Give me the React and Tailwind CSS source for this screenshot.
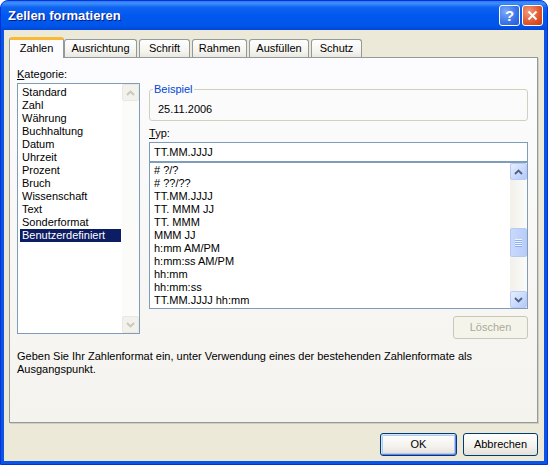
import React from "react";

function Chevron({ dir, color }) {
  return (
    <svg width="9" height="6" viewBox="0 0 9 6">
      <path
        d={dir === "up" ? "M1 5L4.5 1.5L8 5" : "M1 1L4.5 4.5L8 1"}
        fill="none"
        stroke={color}
        strokeWidth="1.8"
      />
    </svg>
  );
}

function ScrollBtn({ dir, disabled }) {
  if (disabled) {
    return (
      <div className="w-[17px] h-[17px] shrink-0 flex items-center justify-center rounded-[2px] border border-[#e9e8e1] bg-[#f2f1eb]">
        <Chevron dir={dir} color="#c9c7bb" />
      </div>
    );
  }
  return (
    <div className="w-[17px] h-[17px] shrink-0 flex items-center justify-center rounded-[2px] border border-[#b9cbf6] bg-[linear-gradient(135deg,#e6eefe_0%,#c8d8fb_60%,#b5c9f7_100%)]">
      <Chevron dir={dir} color="#4d6185" />
    </div>
  );
}

function Scrollbar() {
  return (
    <div className="w-[17px] h-full shrink-0 flex flex-col bg-[linear-gradient(to_right,#f1f0ea,#fbfbf8)]">
      <ScrollBtn dir="up" />
      <div className="flex-1 flex flex-col">
        <div className="mt-[48px] h-[29px] rounded-[2px] border border-[#b5c9f7] bg-[linear-gradient(to_right,#c9d9fc,#b8cdf8)] flex items-center justify-center">
          <svg width="7" height="8" viewBox="0 0 7 8">
            <rect x="0" y="0" width="7" height="1" fill="#eef4fe" />
            <rect x="0" y="1" width="7" height="1" fill="#8cb0f8" />
            <rect x="0" y="2" width="7" height="1" fill="#eef4fe" />
            <rect x="0" y="3" width="7" height="1" fill="#8cb0f8" />
            <rect x="0" y="4" width="7" height="1" fill="#eef4fe" />
            <rect x="0" y="5" width="7" height="1" fill="#8cb0f8" />
            <rect x="0" y="6" width="7" height="1" fill="#eef4fe" />
            <rect x="0" y="7" width="7" height="1" fill="#8cb0f8" />
          </svg>
        </div>
      </div>
      <ScrollBtn dir="down" />
    </div>
  );
}

function DisabledScrollbar() {
  return (
    <div className="w-[17px] h-full shrink-0 flex flex-col bg-[#fbfbf9]">
      <ScrollBtn dir="up" disabled />
      <div className="flex-1" />
      <ScrollBtn dir="down" disabled />
    </div>
  );
}

const categories = [
  "Standard",
  "Zahl",
  "Währung",
  "Buchhaltung",
  "Datum",
  "Uhrzeit",
  "Prozent",
  "Bruch",
  "Wissenschaft",
  "Text",
  "Sonderformat",
  "Benutzerdefiniert",
];

const formats = [
  "# ?/?",
  "# ??/??",
  "TT.MM.JJJJ",
  "TT. MMM JJ",
  "TT. MMM",
  "MMM JJ",
  "h:mm AM/PM",
  "h:mm:ss AM/PM",
  "hh:mm",
  "hh:mm:ss",
  "TT.MM.JJJJ hh:mm",
];

function Tab({ label, active, w, first }) {
  if (active) {
    return (
      <div
        className={`${w} h-[21px] -mb-[1px] relative z-10 flex items-center justify-center rounded-t-[3px] border-x border-[#919b9c] border-t-[3px] border-t-[#f9b934] bg-[#fcfcfe] pb-[2px]`}
      >
        {label}
      </div>
    );
  }
  return (
    <div
      className={`${w} h-[18px] ${first ? "" : "ml-[2px]"} flex items-center justify-center rounded-t-[3px] border-x border-t border-[#919b9c] bg-[linear-gradient(to_bottom,#fefefe,#f4f3ee_70%,#e9e7df)]`}
    >
      {label}
    </div>
  );
}

export default function App() {
  return (
    <div className="w-[548px] h-[465px] bg-white font-['Liberation_Sans',Arial,sans-serif] text-[11px] leading-[13px] text-black select-none">
      <div className="w-full h-full flex flex-col rounded-t-[8px] overflow-hidden bg-[#0a55e4] border border-[#0831d9]">
        {/* Title bar */}
        <div className="h-[29px] shrink-0 flex items-center pl-[7px] pr-[4px] bg-[linear-gradient(to_bottom,#2a7cf2_0%,#3d8ffb_8%,#0f63f0_22%,#0058ee_50%,#0056ea_85%,#0047d6_100%)]">
          <div className="flex-1 text-white font-bold text-[13px] leading-[16px] [text-shadow:1px_1px_0_#0a1883]">
            Zellen formatieren
          </div>
          <div className="flex gap-[2px]">
            <div className="w-[21px] h-[21px] rounded-[3px] border border-white bg-[radial-gradient(circle_at_30%_30%,#7eaaf8,#3a72e8_60%,#2258d8)] flex items-center justify-center text-white font-bold text-[15px] leading-[15px]">
              ?
            </div>
            <div className="w-[21px] h-[21px] rounded-[3px] border border-white bg-[radial-gradient(circle_at_30%_30%,#f09a7c,#e0552c_60%,#c53c12)] flex items-center justify-center">
              <svg width="11" height="11" viewBox="0 0 11 11">
                <path d="M1.5 1.5L9.5 9.5M9.5 1.5L1.5 9.5" stroke="white" strokeWidth="2" />
              </svg>
            </div>
          </div>
        </div>

        {/* Body */}
        <div className="flex-1 mx-[3px] mb-[3px] bg-[#ece9d8] flex flex-col pl-[5px] pr-[6px] pt-[7px]">
          {/* Tabs */}
          <div className="flex items-end h-[20px]">
            <Tab label="Zahlen" active w="w-[55px]" />
            <Tab label="Ausrichtung" w="w-[73px]" first />
            <Tab label="Schrift" w="w-[51px]" />
            <Tab label="Rahmen" w="w-[55px]" />
            <Tab label="Ausfüllen" w="w-[60px]" />
            <Tab label="Schutz" w="w-[51px]" />
          </div>

          {/* Panel */}
          <div className="h-[366px] shrink-0 border border-[#919b9c] bg-[linear-gradient(to_bottom,#fcfcfe,#f4f3ee)] shadow-[1px_1px_0_#d0cebf] flex flex-col pl-[7px] pt-[10px]">
            <div className="flex gap-[9px]">
              {/* Left column */}
              <div className="w-[123px] flex flex-col">
                <div className="h-[13px]">
                  <span className="underline">K</span>ategorie:
                </div>
                <div className="mt-[2px] h-[251px] border border-[#7f9db9] bg-white flex">
                  <div className="flex-1 pl-[2px] pr-[1px] pt-[2px] flex flex-col">
                    {categories.map((c) => (
                      <div
                        key={c}
                        className={`h-[13px] pl-[2px] whitespace-nowrap ${
                          c === "Benutzerdefiniert" ? "bg-[#0c1d63] text-white" : ""
                        }`}
                      >
                        {c}
                      </div>
                    ))}
                  </div>
                  <DisabledScrollbar />
                </div>
              </div>

              {/* Right column */}
              <div className="w-[379px] flex flex-col pt-[15px]">
                <fieldset className="h-[38px] border border-[#d0d0bf] rounded-[3px]">
                  <legend className="ml-[3px] px-[1px] text-[#0046d5] leading-[13px]">Beispiel</legend>
                  <div className="pt-[7px] pl-[8px]">25.11.2006</div>
                </fieldset>
                <div className="mt-[6px] h-[13px]">
                  <span className="underline">T</span>yp:
                </div>
                <div className="mt-[2px] h-[20px] border border-[#7f9db9] bg-white flex items-center pl-[4px]">
                  TT.MM.JJJJ
                </div>
                <div className="h-[147px] border border-[#7f9db9] bg-white flex">
                  <div className="flex-1 pl-[2px] pt-[1px] flex flex-col">
                    {formats.map((f) => (
                      <div key={f} className="h-[13px] pl-[2px] whitespace-nowrap">
                        {f}
                      </div>
                    ))}
                  </div>
                  <Scrollbar />
                </div>
                <div className="mt-[7px] flex justify-end">
                  <div className="w-[75px] h-[23px] rounded-[3px] border border-[#c9c7ba] bg-[#f5f4ea] text-[#aca899] flex items-center justify-center">
                    Löschen
                  </div>
                </div>
              </div>
            </div>
            <div className="mt-[11px]">
              Geben Sie Ihr Zahlenformat ein, unter Verwendung eines der bestehenden Zahlenformate als
              <br />
              Ausgangspunkt.
            </div>
          </div>

          {/* Buttons */}
          <div className="mt-[10px] flex justify-end gap-[6px]">
            <div className="w-[77px] h-[23px] rounded-[3px] border border-[#003c74] bg-[linear-gradient(to_bottom,#ffffff,#f3f2ec_60%,#e3e0d5)] shadow-[inset_1px_1px_0_#cee7ff,inset_-1px_-1px_0_#6982ee,inset_0_0_0_2px_#b2cbf3] flex items-center justify-center">
              OK
            </div>
            <div className="w-[75px] h-[23px] rounded-[3px] border border-[#003c74] bg-[linear-gradient(to_bottom,#ffffff,#f3f2ec_60%,#e3e0d5)] flex items-center justify-center">
              Abbrechen
            </div>
          </div>
        </div>
      </div>
    </div>
  );
}
